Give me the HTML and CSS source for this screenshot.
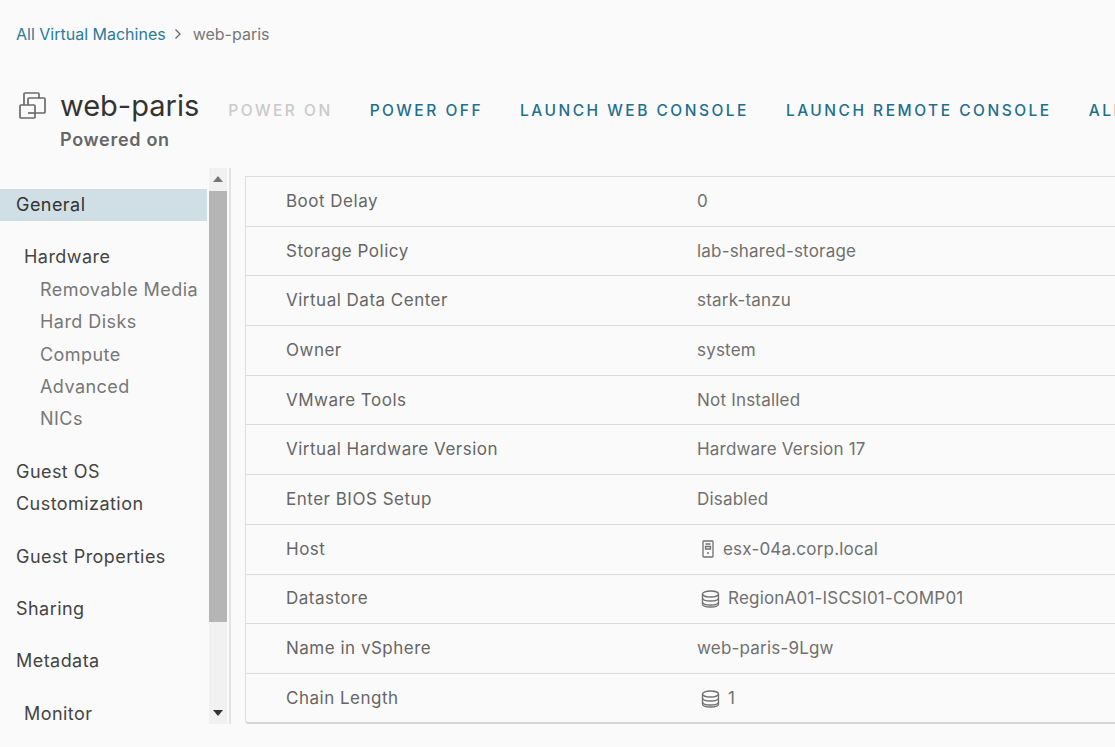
FILE: index.html
```html
<!DOCTYPE html>
<html lang="en">
<head>
    <meta charset="UTF-8">
    <title>web-paris</title>
    <link rel="stylesheet" href="styles.css">
</head>
<body>

    <nav class="crumbs">
        <a href="#">All Virtual Machines</a>
        <svg class="crumb-sep" width="8" height="12" viewBox="0 0 8 12"><path d="M1.500 1.500 6 6l-4.500 4.500" fill="none" stroke="#666" stroke-width="1.300"/></svg>
        <span>web-paris</span>
    </nav>

    <header class="head">
        <svg class="vm-icon" width="28" height="28" viewBox="0 0 28 28" fill="none" stroke="#6b6b6b" stroke-width="1.700">
            <path d="M6 14V3a1 1 0 0 1 1-1h13a1 1 0 0 1 1 1v4"/>
            <path d="M10 14V8a1 1 0 0 1 1-1h15a1 1 0 0 1 1 1v13a1 1 0 0 1-1 1H17"/>
            <rect x="2" y="14" width="15" height="13" rx="1"/>
            <path d="M10 22h7"/>
        </svg>
        <div class="head-title">
            <h1>web-paris</h1>
            <div class="status">Powered on</div>
        </div>
        <div class="actions">
            <a class="off" href="#">POWER ON</a>
            <a href="#">POWER OFF</a>
            <a href="#">LAUNCH WEB CONSOLE</a>
            <a href="#">LAUNCH REMOTE CONSOLE</a>
            <a href="#">ALL</a>
        </div>
    </header>

    <main class="body">
        <aside class="side">
            <ul class="side-list">
                <li class="top active">General</li>
                <li class="group">Hardware</li>
                <li class="sub">Removable Media</li>
                <li class="sub">Hard Disks</li>
                <li class="sub">Compute</li>
                <li class="sub">Advanced</li>
                <li class="sub">NICs</li>
                <li class="top two">Guest OS Customization</li>
                <li class="top">Guest Properties</li>
                <li class="top">Sharing</li>
                <li class="top">Metadata</li>
                <li class="group">Monitor</li>
            </ul>
            <div class="scroll">
                <svg class="arrow" width="10" height="6" viewBox="0 0 10 6"><path d="M5 0l5 6H0z" fill="#777"/></svg>
                <div class="thumb"></div>
                <svg class="arrow arrow-down" width="10" height="6" viewBox="0 0 10 6"><path d="M0 0h10L5 6z" fill="#333"/></svg>
            </div>
        </aside>

        <section class="panel">
            <div class="row"><div class="key">Boot Delay</div><div class="val">0</div></div>
            <div class="row"><div class="key">Storage Policy</div><div class="val">lab-shared-storage</div></div>
            <div class="row"><div class="key">Virtual Data Center</div><div class="val">stark-tanzu</div></div>
            <div class="row"><div class="key">Owner</div><div class="val">system</div></div>
            <div class="row"><div class="key">VMware Tools</div><div class="val">Not Installed</div></div>
            <div class="row"><div class="key">Virtual Hardware Version</div><div class="val">Hardware Version 17</div></div>
            <div class="row"><div class="key">Enter BIOS Setup</div><div class="val">Disabled</div></div>
            <div class="row">
                <div class="key">Host</div>
                <div class="val">
                    <svg class="host-icon" width="12" height="18" viewBox="0 0 12 18" fill="none" stroke="#707070" stroke-width="1.300">
                        <rect x="1" y="1" width="10" height="16" rx=".8"/>
                        <path d="M3.500 4h5M3.500 6.500h5v2.500h-5zM5 13h2"/>
                    </svg>
                    esx-04a.corp.local
                </div>
            </div>
            <div class="row">
                <div class="key">Datastore</div>
                <div class="val">
                    <svg class="db-icon" width="19" height="18" viewBox="0 0 19 18" fill="none" stroke="#707070" stroke-width="1.300">
                        <path d="M1.500 4v10c0 1.700 3.500 3 8 3s8-1.300 8-3V4"/>
                        <ellipse cx="9.500" cy="4" rx="8" ry="3"/>
                        <path d="M1.500 8c0 1.700 3.500 3 8 3s8-1.300 8-3M1.500 12c0 1.700 3.500 3 8 3s8-1.300 8-3"/>
                    </svg>
                    RegionA01-ISCSI01-COMP01
                </div>
            </div>
            <div class="row"><div class="key">Name in vSphere</div><div class="val">web-paris-9Lgw</div></div>
            <div class="row">
                <div class="key">Chain Length</div>
                <div class="val">
                    <svg class="db-icon" width="19" height="18" viewBox="0 0 19 18" fill="none" stroke="#707070" stroke-width="1.300">
                        <path d="M1.500 4v10c0 1.700 3.500 3 8 3s8-1.300 8-3V4"/>
                        <ellipse cx="9.500" cy="4" rx="8" ry="3"/>
                        <path d="M1.500 8c0 1.700 3.500 3 8 3s8-1.300 8-3M1.500 12c0 1.700 3.500 3 8 3s8-1.300 8-3"/>
                    </svg>
                    1
                </div>
            </div>
        </section>
    </main>

</body>
</html>
```

FILE: styles.css
```css
*{
    padding: 0;
    margin: 0;
    box-sizing: border-box;
}
html,body{
    height: 100%;
    overflow: hidden;
}
body{
    background-color: #fafafa;
    font-family: "Inter", "Open Sans", sans-serif;
    color: #666;
    font-size: 16px;
}
a{
    text-decoration: none;
}

/* breadcrumb */
.crumbs{
    display: flex;
    align-items: center;
    height: 20px;
    margin: 24px 0 0 16px;
    font-size: 16px;
    color: #777;
}
.crumbs a{
    color: #2b7a9c;
}
.crumb-sep{
    margin: 0 11px 0 8px;
}

/* title row */
.head{
    display: flex;
    height: 80px;
    margin-top: 44px;
    padding-left: 18px;
}
.vm-icon{
    margin: 3px 14px 0 0;
    flex-shrink: 0;
}
.head-title{
    flex-shrink: 0;
}
.head-title h1{
    font-size: 29px;
    font-weight: 400;
    line-height: 36px;
    color: #333;
}
.status{
    margin-top: 4px;
    font-size: 18px;
    font-weight: 600;
    line-height: 24px;
    color: #666;
    letter-spacing: 0.700px;
}
.actions{
    display: flex;
    gap: 37px;
    margin-left: 29px;
    padding-top: 11px;
    white-space: nowrap;
    font-size: 15.500px;
    font-weight: 500;
    letter-spacing: 2.500px;
    line-height: 24px;
}
.actions a{
    color: #1f6f8f;
}
.actions a.off{
    color: #c9c9c9;
}

/* sidebar + table */
.body{
    display: flex;
    height: 556px;
}
.side{
    display: flex;
    width: 231px;
    flex-shrink: 0;
    border-right: 2px solid #e3e3e3;
    height: 556px;
}
.side-list{
    list-style: none;
    width: 209px;
    padding-top: 21px;
    overflow: hidden;
    font-size: 18px;
    line-height: 32.400px;
    letter-spacing: 0.450px;
    color: #444;
}
.side-list .top{
    padding-left: 16px;
    margin-bottom: 20px;
    margin-right: 2px;
}
.side-list .two{
    width: 190px;
    margin-top: 20px;
}
.side-list .active{
    background-color: #d0dfe6;
    color: #333;
}
.side-list .group{
    padding-left: 24px;
}
.side-list .sub{
    padding-left: 40px;
    color: #777;
    white-space: nowrap;
}
.scroll{
    width: 18px;
    background-color: #f1f1f1;
    display: flex;
    flex-direction: column;
    align-items: center;
    flex-shrink: 0;
}
.arrow{
    margin-top: 8px;
    flex-shrink: 0;
}
.arrow-down{
    margin-top: auto;
    margin-bottom: 8px;
}
.thumb{
    width: 18px;
    height: 431px;
    margin-top: 9px;
    background-color: #b5b5b5;
}
.panel{
    width: 100%;
    margin: 8px 0 0 14px;
    height: 548px;
    border-top: 1px solid #ddd;
    border-left: 1px solid #ddd;
    border-bottom: 2px solid #d5d5d5;
    border-bottom-left-radius: 4px;
    margin-right: -20px;
    min-width: 900px;
}
.row{
    display: flex;
    align-items: center;
    height: 49.700px;
    padding-bottom: 1px;
    border-bottom: 1px solid #dcdcdc;
    font-size: 17px;
}
.row:last-child{
    border-bottom: none;
}
.key{
    width: 451px;
    padding-left: 40px;
    color: #666;
    letter-spacing: 0.500px;
    flex-shrink: 0;
}
.val{
    display: flex;
    align-items: center;
    color: #707070;
    letter-spacing: 0.200px;
    white-space: nowrap;
}
.host-icon{
    margin: 0 9px 0 5px;
}
.db-icon{
    margin: 2px 8px 0 4px;
}
```
